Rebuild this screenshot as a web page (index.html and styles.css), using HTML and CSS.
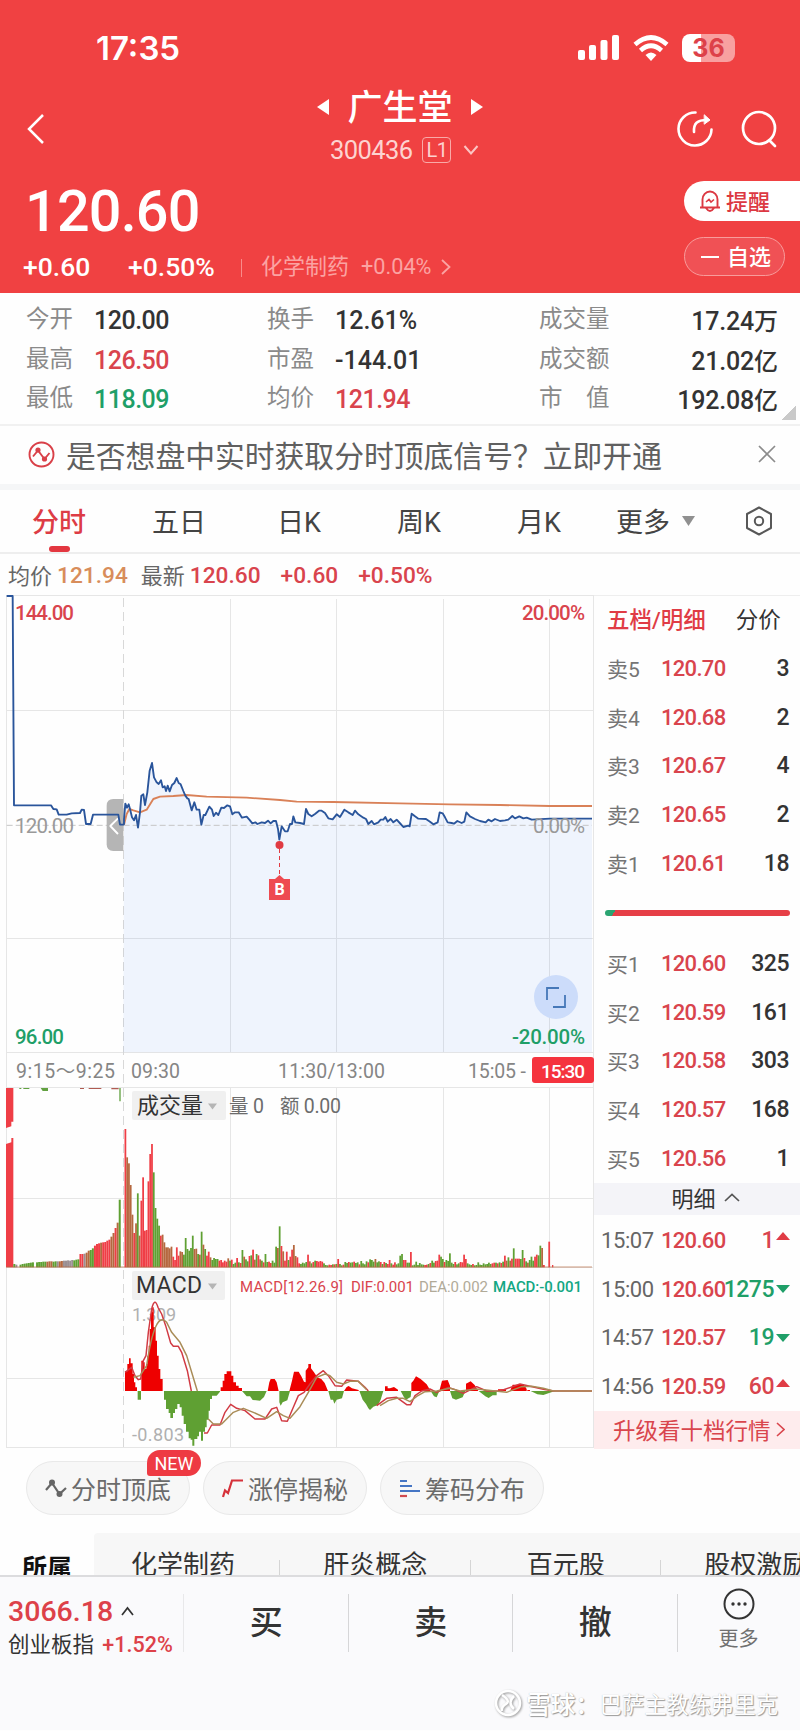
FILE: index.html
```html
<!DOCTYPE html>
<html lang="zh-CN">
<head>
    <meta charset="UTF-8">
    <meta name="viewport" content="width=device-width, initial-scale=1.0">
    <title>广生堂 300436</title>
    <link rel="stylesheet" href="styles.css">
</head>
<body>
    <header class="header">
        <div class="status-bar">
            <span class="clock">17:35</span>
            <div class="status-icons">
                <svg width="42" height="26" viewBox="0 0 42 26" fill="#fff">
                    <rect x="0" y="15" width="7" height="10" rx="2"/>
                    <rect x="11" y="10" width="7" height="15" rx="2"/>
                    <rect x="22.500" y="5" width="7" height="20" rx="2"/>
                    <rect x="34" y="0" width="7" height="25" rx="2"/>
                </svg>
                <svg width="36" height="27" viewBox="0 0 36 27" fill="none" stroke="#fff" stroke-width="4.600">
                    <path d="M2 9.500Q18 -4.500 34 9.500"/>
                    <path d="M7.500 15.500Q18 6 28.500 15.500"/>
                    <path d="M12.500 20Q18 15 23.500 20L18 26Z" fill="#fff" stroke="none"/>
                </svg>
                <div class="battery"><span>36</span></div>
            </div>
        </div>
        <div class="nav">
            <svg class="back" width="18" height="32" viewBox="0 0 18 32" fill="none" stroke="#fff" stroke-width="2.500"><path d="M16 2L2 16L16 30"/></svg>
            <div class="title">
                <div class="title-name">
                    <svg width="12" height="16" viewBox="0 0 12 16" fill="#fff"><path d="M12 0V16L0 8Z"/></svg>
                    <span>广生堂</span>
                    <svg width="12" height="16" viewBox="0 0 12 16" fill="#fff"><path d="M0 0V16L12 8Z"/></svg>
                </div>
                <div class="title-code">
                    <span>300436</span>
                    <span class="level">L1</span>
                    <svg width="16" height="10" viewBox="0 0 16 10" fill="none" stroke="#fbc5c3" stroke-width="2"><path d="M1.500 1L8 8.500L14.500 1"/></svg>
                </div>
            </div>
            <div class="nav-icons">
                <svg width="36" height="38" viewBox="0 0 36 38" fill="none" stroke="#fff" stroke-width="2.600" stroke-linecap="round">
                    <path d="M18.500 2.500A16.500 16.500 0 1 0 34.500 19.500"/>
                    <path d="M17 22C16.500 13.500 20 10 30 10"/>
                    <path d="M27.500 5L33 10L27.500 14Z" fill="#fff" stroke-width="1"/>
                </svg>
                <svg width="36" height="38" viewBox="0 0 36 38" fill="none" stroke="#fff" stroke-width="2.700" stroke-linecap="round">
                    <circle cx="18" cy="18" r="16"/><path d="M28.500 30.500L34 36"/>
                </svg>
            </div>
        </div>
        <div class="quote">
            <div>
                <div class="price">120.60</div>
                <div class="change">
                    <span class="diff">+0.60</span>
                    <span class="pct">+0.50%</span>
                    <span class="sector">化学制药</span>
                    <span class="sector-pct">+0.04%</span>
                    <svg width="10" height="16" viewBox="0 0 10 16" fill="none" stroke="#fba3a2" stroke-width="1.800"><path d="M1 1L8.500 8L1 15"/></svg>
                </div>
            </div>
            <div class="actions">
                <div class="remind">
                    <svg width="22" height="23" viewBox="0 0 22 23" fill="none" stroke="#dc3842" stroke-width="1.900">
                        <path d="M1 17.500H21M3.500 17V9.500A7.500 8 0 0 1 18.500 9.500V17M7 18Q11 24 15 18"/>
                        <path d="M7 12L10 9.500L12 12L15 9.500" stroke-width="1.600"/>
                    </svg>
                    <span>提醒</span>
                </div>
                <div class="favor"><i></i><span>自选</span></div>
            </div>
        </div>
    </header>

    <section class="stats">
        <span>今开</span><b>120.00</b><span>换手</span><b class="wide">12.61%</b><span>成交量</span><b class="right">17.24<em>万</em></b>
        <span>最高</span><b class="red">126.50</b><span>市盈</span><b class="wide">-144.01</b><span>成交额</span><b class="right">21.02<em>亿</em></b>
        <span>最低</span><b class="green">118.09</b><span>均价</span><b class="red">121.94</b><span>市　值</span><b class="right">192.08<em>亿</em></b>
    </section>

    <section class="notice">
        <svg width="27" height="27" viewBox="0 0 27 27" fill="none" stroke="#d94048" stroke-width="1.900">
            <circle cx="13.500" cy="13.500" r="12"/>
            <path d="M5 15.500L10 9.500L16.500 18L21.500 12"/>
            <g fill="#d94048" stroke="none"><circle cx="10" cy="9" r="2.600"/><circle cx="16.500" cy="18" r="2.600"/></g>
        </svg>
        <span>是否想盘中实时获取分时顶底信号？立即开通</span>
        <svg width="18" height="18" viewBox="0 0 18 18" stroke="#8b8b8b" stroke-width="1.700"><path d="M1 1L17 17M17 1L1 17"/></svg>
    </section>

    <nav class="tabs">
        <span class="active">分时</span>
        <span>五日</span>
        <span>日K</span>
        <span>周K</span>
        <span>月K</span>
        <span class="more">更多<svg width="13" height="10" viewBox="0 0 13 10" fill="#909090"><path d="M0 0H13L6.500 10Z"/></svg></span>
        <svg class="setting" width="28" height="30" viewBox="0 0 28 30" fill="none" stroke="#585858" stroke-width="2">
            <path d="M14 1.500L26 8V22L14 28.500L2 22V8Z" stroke-linejoin="round"/><circle cx="14" cy="15" r="4.200"/>
        </svg>
    </nav>

    <div class="latest">
        <span>均价</span><b class="orange">121.94</b><span>最新</span><b>120.60</b><b>+0.60</b><b>+0.50%</b>
    </div>

    <main class="board">
        <svg class="chart" width="594" height="856" viewBox="0 596 594 856">
            <!-- grid -->
            <g stroke="#e6e6e6" fill="none">
                <path d="M6.500 596V1449M593.500 596V1449"/>
                <path d="M230.500 600V1053M336.500 600V1053M443.500 600V1053M549.500 600V1053"/>
                <path d="M230.500 1088V1449M336.500 1088V1449M443.500 1088V1449M549.500 1088V1449"/>
                <path d="M6 596.500H594M6 711.500H594M6 939.500H594M6 1053.500H594M6 1088.500H594M6 1199.500H594M6 1268.500H594M6 1379.500H594M6 1448.500H594"/>
                <path d="M123.500 599V1449" stroke="#d8d8d8" stroke-dasharray="9 5"/>
            </g>

            <!-- price -->
            <g class="line" transform="translate(0 580) scale(.33333)">
                <path id="area" fill="#3c78f0" fill-opacity=".075"/>
                <path d="M20 739H1776" stroke="#c6c6c6" stroke-dasharray="18 9"/>
                <g fill="#b5b5b5" stroke="none"><path d="M370 660H340Q320 660 320 680V796Q320 816 340 816H370Z"/></g>
                <path d="M354 718L331 741L354 765" stroke="#fff"/>
                <polyline points="372,737 380,705 388,690 400,694 420,700 440,692 460,660 480,653 520,651 560,648 620,653 740,656 840,663 890,668 1000,669 1200,673 1350,676 1500,678 1650,681 1776,681" stroke="#d98158"/>
                <polyline points="20,51 38,51 42,679 153,679 160,690 170,691 176,707 200,707 215,703 240,702 245,692 252,693 258,735 272,735 279,707 355,707 360,737 372,737" stroke="#2a559b"/>
                <polyline id="price" points="372,737 372,720 376,674 381,686 386,676 390,690 396,715 402,724 408,708 414,746 420,700 424,650 430,646 435,678 442,640 449,575 456,552 462,595 470,610 476,615 483,604 488,625 494,622 498,636 503,620 509,637 516,618 523,612 530,597 536,612 542,616 550,636 556,650 562,658 566,660 575,694 583,670 590,692 598,692 604,737 611,708 616,708 628,683 636,692 641,711 648,701 655,708 664,686 672,687 682,679 690,682 697,706 705,700 716,700 726,716 740,713 748,722 757,733 766,730 772,735 785,730 795,732 804,725 812,733 820,726 828,726 834,750 838,782 845,742 855,757 863,757 870,735 876,735 880,712 886,730 900,732 912,735 918,690 925,705 935,712 945,705 957,695 965,695 975,702 985,718 998,721 1010,706 1020,714 1033,692 1045,700 1058,708 1065,695 1075,706 1090,716 1098,720 1105,735 1115,726 1122,736 1135,730 1142,722 1150,722 1156,714 1163,728 1172,720 1180,730 1190,722 1202,735 1210,744 1225,740 1229,742 1235,704 1245,712 1255,719 1278,720 1290,728 1300,736 1313,730 1319,700 1328,703 1335,715 1343,730 1355,732 1362,734 1372,726 1385,732 1393,728 1399,700 1410,712 1425,720 1440,726 1457,730 1465,722 1475,727 1485,720 1500,726 1515,724 1525,722 1537,711 1545,718 1558,712 1570,718 1580,716 1595,722 1650,719 1776,719" stroke="#2a559b"/>
            </g>
            <circle cx="279.500" cy="846" r="4" fill="#e03a42"/>
            <path d="M279.500 850V878" stroke="#e03a42" stroke-dasharray="4 3"/>
            <path d="M275 880L279.500 876L284 880H290V901H269V880Z" fill="#ee4a51"/>
            <text x="279.500" y="896" text-anchor="middle" fill="#fff" font-size="16" font-weight="700">B</text>
            <g font-size="20.500" font-weight="500">
                <text x="15" y="621" textLength="59" class="red">144.00</text>
                <text x="15" y="834" textLength="59" fill="#999" font-weight="400">120.00</text>
                <text x="15" y="1045" textLength="49" class="green">96.00</text>
                <text x="522" y="621" textLength="63" class="red">20.00%</text>
                <text x="533" y="834" textLength="52" fill="#999" font-weight="400">0.00%</text>
                <text x="512" y="1045" textLength="73" class="green">-20.00%</text>
            </g>
            <circle cx="556" cy="998" r="22" fill="#ccdcfa"/>
            <path d="M547 1001V989H559M553 1008H565V996" fill="none" stroke="#4678b8" stroke-width="1.800"/>

            <!-- time axis -->
            <g font-size="19.500" fill="#858585">
                <text x="16" y="1079" textLength="99">9:15～9:25</text>
                <text x="131" y="1079" textLength="49">09:30</text>
                <text x="278" y="1079" textLength="107">11:30/13:00</text>
                <text x="468" y="1079" textLength="58">15:05 -</text>
            </g>
            <rect x="532" y="1058" width="62" height="26" rx="3" fill="#f5333e"/>
            <text x="541" y="1079" textLength="44" font-size="19" fill="#fff" font-weight="500">15:30</text>

            <!-- volume -->
            <g id="volume" transform="translate(0 1060) scale(.33333)">
                <path d="M18 87H40V188H34V202L18 207ZM18 255L34 250V237H40V625H18Z" fill="#ef3e46"/>
                <path d="M358 87H362V127H358ZM122 87H144V96H128ZM58 87H64V90H58ZM70 87H88V90H70Z" fill="#62a141"/>
                <path d="M240 87H252V90H240ZM266 87H304V90H266ZM334 87H356V91H334Z" fill="#b05b52"/>
            </g>
            <rect x="132" y="1092" width="94" height="29" rx="2" fill="#f0f0f0"/>
            <text x="137" y="1114" textLength="66" font-size="22" fill="#333">成交量</text>
            <path d="M208 1104.500H217L212.500 1110.500Z" fill="#b5b5b5"/>
            <g font-size="19.500" fill="#6c6c6c">
                <text x="229" y="1114" textLength="35">量 0</text>
                <text x="280" y="1114" textLength="61">额 0.00</text>
            </g>

            <!-- macd -->
            <rect x="132" y="1272" width="93" height="29" rx="2" fill="#f0f0f0"/>
            <text x="136" y="1293.500" textLength="66" font-size="23" fill="#333">MACD</text>
            <path d="M208 1284.500H217L212.500 1290.500Z" fill="#b5b5b5"/>
            <g font-size="15">
                <text x="240" y="1293" textLength="103" class="red">MACD[12.26.9]</text>
                <text x="351" y="1293" textLength="63" class="red">DIF:0.001</text>
                <text x="419" y="1293" textLength="69" fill="#b1aa98">DEA:0.002</text>
                <text x="493" y="1293" textLength="89" fill="#12a783" font-weight="500">MACD:-0.001</text>
            </g>
            <g font-size="18" fill="#b0b0b0">
                <text x="132" y="1322" textLength="44">1.309</text>
                <text x="132" y="1442" textLength="52">-0.803</text>
            </g>
            <g class="macd" transform="translate(0 1060) scale(.33333)">
                <path fill="#ee0000" d="M375 996V937H382V915H387V898H392V913H398V945H402V970H406V985H411V996ZM424 996V905H429V910H434V930H439V915H442V890H446V860H449V810H453V760H457V745H461V805H467V845H471V890H476V930H481V960H488V996ZM662 996V985H668V965H673V945H680V937H694V950H700V970H708V980H716V987H726V996ZM803 996L808 970L812 960H824L830 970L836 996ZM868 996L876 965L882 938H896L904 952L912 968L917 970V935L925 925V915H933V928L942 940L952 955L964 960L974 972L984 996ZM1032 996L1040 984L1046 981L1056 988L1076 993V996ZM1155 996V982H1163V988H1170L1182 984L1194 992V996ZM1234 996V972L1240 965L1248 952L1262 960L1280 976L1292 996ZM1318 996L1326 965L1343 963L1350 980V996ZM1398 996V974L1412 967L1424 978L1435 996ZM1494 996V991H1518V996ZM1530 996L1538 977H1572L1580 990V996ZM1582 996V993H1590V996Z"/>
                <path fill="#5fa033" d="M413 996V1022H423V996ZM492 996V1022H498V1050H506V1062H511V1077H519V1062H525V1050H532V1035H539V1045H545V1070H551V1095H558V1118H566V1138H572V1142H577V1160H583V1140H592V1132H597V1118H603V1145H609V1118H615V1105H620V1082H626V1055H630V1020H636V1010H650L660 998V996ZM726 996L740 1012L750 1012L758 1023L780 1025L792 1014L800 996ZM838 996V1030L842 1040L848 1030L862 1024L870 996ZM985 996L992 1022H999L1003 1034L1010 1022L1026 1018L1032 996ZM1078 996L1088 1022L1098 1035L1105 1048L1110 1053L1120 1043L1134 1038L1142 1022L1150 996ZM1202 996L1212 1015L1218 1022L1232 1014L1234 996ZM1292 996L1302 1012L1310 1015L1318 996ZM1350 996L1357 1018L1368 1022L1388 1015L1396 996ZM1436 996L1456 1012L1466 1017L1478 1009H1490V996ZM1592 996L1612 1006L1630 1008L1665 996Z"/>
                <g class="line">
                    <path stroke="#d13a43" d="M375 940L395 925L405 950L415 962L422 960L430 905L438 890L445 820L455 750Q464 712 474 745L485 765L497 800L512 852L520 862H535L545 880L562 935L574 996M612 1122L622 1122L635 1098L660 1098L675 1060L692 1036L710 1048L735 1055L765 1080L795 1080L815 1050L830 1045L845 1085L862 1087L880 1045L895 1010L912 1000L930 975L950 950L970 935L985 950L1005 980L1025 982L1040 963L1075 967L1095 985L1105 996M1130 1040L1160 1018L1190 1015L1220 1037L1232 1037L1245 1010L1265 996L1290 990L1310 1000L1345 985L1365 992L1390 1003L1430 983L1460 996L1500 996L1560 975L1630 991L1660 996H1776"/>
                    <path stroke="#a98c57" d="M400 955L420 950L440 920Q465 750 500 790L515 820L540 850L560 890L575 940L592 996M625 1080L640 1095L665 1095L700 1060L730 1048L760 1060L800 1078L830 1058L850 1070L870 1078L900 1043L925 1000L950 955L975 945L990 950L1010 970L1030 975L1050 967L1075 967L1100 992M1140 1040L1165 1025L1190 1018L1210 1018L1230 1028L1250 1012L1275 998L1310 996L1350 988L1380 996L1430 990L1465 994L1520 1000L1565 983L1595 982L1630 988L1660 996H1776"/>
                </g>
            </g>
        </svg>

        <aside class="depth">
            <div class="depth-tabs"><span class="active">五档/明细</span><span>分价</span></div>
            <div class="orders">
                <div class="order"><span>卖5</span><b>120.70</b><i>3</i></div>
                <div class="order"><span>卖4</span><b>120.68</b><i>2</i></div>
                <div class="order"><span>卖3</span><b>120.67</b><i>4</i></div>
                <div class="order"><span>卖2</span><b>120.65</b><i>2</i></div>
                <div class="order"><span>卖1</span><b>120.61</b><i>18</i></div>
            </div>
            <div class="ratio"></div>
            <div class="orders">
                <div class="order"><span>买1</span><b>120.60</b><i>325</i></div>
                <div class="order"><span>买2</span><b>120.59</b><i>161</i></div>
                <div class="order"><span>买3</span><b>120.58</b><i>303</i></div>
                <div class="order"><span>买4</span><b>120.57</b><i>168</i></div>
                <div class="order"><span>买5</span><b>120.56</b><i>1</i></div>
            </div>
            <div class="deals-title">明细<svg width="16" height="9" viewBox="0 0 16 9" fill="none" stroke="#555" stroke-width="1.700"><path d="M1 8L8 1.500L15 8"/></svg></div>
            <div class="orders">
                <div class="order deal up"><span>15:07</span><b>120.60</b><i>1</i></div>
                <div class="order deal down"><span>15:00</span><b>120.60</b><i>1275</i></div>
                <div class="order deal down"><span>14:57</span><b>120.57</b><i>19</i></div>
                <div class="order deal up"><span>14:56</span><b>120.59</b><i>60</i></div>
            </div>
            <div class="upgrade">升级看十档行情<svg width="9" height="15" viewBox="0 0 9 15" fill="none" stroke="#d9464d" stroke-width="1.600"><path d="M1 1L8 7.500L1 14"/></svg></div>
        </aside>
    </main>

    <div class="tools">
        <div class="tool">
            <svg width="22" height="19" viewBox="0 0 22 19" fill="none" stroke="#666" stroke-width="2.200"><path d="M1 11L7 4L14.500 15L21 9"/><g fill="#666" stroke="none"><circle cx="7" cy="3.500" r="3"/><circle cx="14.500" cy="15" r="3"/></g></svg>
            <span>分时顶底</span>
            <em class="new">NEW</em>
        </div>
        <div class="tool">
            <svg width="22" height="19" viewBox="0 0 22 19" fill="none" stroke="#d6313a" stroke-width="2.200"><path d="M1 18L3 11.500L6 14L10 1.500H21"/></svg>
            <span>涨停揭秘</span>
        </div>
        <div class="tool">
            <svg width="22" height="19" viewBox="0 0 22 19" stroke="#4575c4" stroke-width="2.200"><path d="M1 2H8M1 7H13M1 12H21"/><path d="M1 17H8" stroke="#cf4b50"/></svg>
            <span>筹码分布</span>
        </div>
    </div>

    <section class="concepts">
        <b>所属</b>
        <div class="concept-list">
            <span>化学制药</span><span>肝炎概念</span><span>百元股</span><span>股权激励</span>
        </div>
    </section>

    <footer class="footer">
        <div class="trade">
            <div class="index">
                <div class="index-value">3066.18<svg width="13" height="10" viewBox="0 0 13 10" fill="none" stroke="#333" stroke-width="1.700"><path d="M1 9L6.500 2L12 9"/></svg></div>
                <div class="index-name">创业板指 <span>+1.52%</span></div>
            </div>
            <div class="btn">买</div>
            <div class="btn">卖</div>
            <div class="btn">撤</div>
            <div class="btn-more">
                <svg width="32" height="32" viewBox="0 0 32 32"><circle cx="16" cy="16" r="14.500" fill="none" stroke="#333" stroke-width="2"/><g fill="#333"><circle cx="10" cy="16" r="1.700"/><circle cx="16" cy="16" r="1.700"/><circle cx="22" cy="16" r="1.700"/></g></svg>
                <span>更多</span>
            </div>
        </div>
        <div class="watermark">
            <svg width="28" height="28" viewBox="0 0 28 28" fill="none" stroke="#fff" stroke-width="2.500"><circle cx="14" cy="14" r="12"/><path d="M8 6Q17 12 12 15T8 22M20 7Q13 14 20 20"/></svg>
            <b>雪球：</b><span>巴萨主教练弗里克</span>
        </div>
    </footer>

    <script src="chart.js"></script>
</body>
</html>
```
FILE: styles.css
```css
* {
    box-sizing: border-box;
}

body {
    margin: 0;
    width: 800px;
    height: 1731px;
    overflow: hidden;
    background: #fefefe;
    font-family: Roboto, "Noto Sans CJK SC", sans-serif;
    color: #333;
}

svg {
    flex: none;
}

i, em {
    font-style: normal;
}

.red {
    color: #d9444d;
    fill: #d9444d;
}

.green {
    color: #1f9f68;
    fill: #1f9f68;
}

/* header */
.header {
    height: 293px;
    background: #f04142;
    color: #fff;
}

.status-bar {
    display: flex;
    justify-content: space-between;
    align-items: center;
    height: 96px;
    padding: 0 63px 0 96px;
}

.clock {
    font: 600 33px/40px Inter, sans-serif;
}

.status-icons {
    display: flex;
    align-items: center;
    gap: 13px;
}

.battery {
    width: 53px;
    height: 28px;
    margin-right: 2px;
    border-radius: 8px;
    background: linear-gradient(90deg, #fff 36%, #f8a0a0 36%);
    color: #dd4149;
    font: 700 25px/28px Inter, sans-serif;
    text-align: center;
}

.nav {
    display: flex;
    height: 80px;
    padding: 0 23px 0 27px;
}

.back {
    margin-top: 17px;
}

.title {
    width: 240px;
    margin-left: 235px;
}

.title-name {
    display: flex;
    justify-content: center;
    align-items: center;
    gap: 18px;
    height: 22px;
    font-size: 35px;
    font-weight: 500;
}

.title-name span {
    margin-top: -6px;
}

.title-code {
    display: flex;
    align-items: center;
    height: 26px;
    margin-top: 19px;
    padding-left: 50px;
    font-size: 25.5px;
    letter-spacing: -0.6px;
    color: #fdd3d0;
}

.level {
    width: 29px;
    height: 26px;
    margin: 0 12px 0 10px;
    border: 1px solid #f9aaa8;
    border-radius: 4px;
    font-size: 20px;
    line-height: 24px;
    text-align: center;
}

.nav-icons {
    display: flex;
    gap: 28px;
    margin: 14px 0 0 auto;
}

.quote {
    display: flex;
    justify-content: space-between;
}

.price {
    height: 70px;
    padding-left: 25px;
    font-size: 57.5px;
    font-weight: 500;
    line-height: 72px;
    letter-spacing: -0.8px;
}

.change {
    display: flex;
    align-items: center;
    height: 41px;
    padding-left: 23px;
    font-size: 26.5px;
    font-weight: 500;
}

.diff {
    width: 105px;
}

.pct {
    width: 113px;
}

.sector {
    padding-left: 20px;
    background: linear-gradient(#f98b8a, #f98b8a) 0 60% / 1px 18px no-repeat;
    color: #fba3a2;
    font-size: 22px;
    font-weight: 400;
    line-height: 32px;
}

.sector-pct {
    width: 71px;
    margin: 0 9px 0 12px;
    color: #fba3a2;
    font-size: 21.7px;
    font-weight: 400;
}

.actions {
    width: 116px;
    padding-top: 5px;
    font-size: 22px;
    font-weight: 500;
}

.actions span {
    margin-top: -3px;
}

.remind {
    display: flex;
    align-items: center;
    gap: 5px;
    height: 40px;
    padding-left: 15px;
    border-radius: 20px 0 0 20px;
    background: #fff;
    color: #dc3842;
}

.favor {
    display: flex;
    align-items: center;
    gap: 8px;
    width: 101px;
    height: 39px;
    margin-top: 16px;
    padding-left: 16px;
    border: 1px solid #f89c9b;
    border-radius: 20px;
    background: #f05155;
}

.favor i {
    width: 18px;
    height: 2px;
    background: #fff;
}

/* stats */
.stats {
    display: grid;
    grid-template-columns: 68px 173px 68px 204px 110px 1fr;
    grid-auto-rows: 39.5px;
    align-items: center;
    height: 133px;
    padding: 8px 22px 0 26px;
    border-bottom: 2px solid #f1f1f1;
    background: linear-gradient(135deg, transparent 50%, #c9c9c9 50%) 782px 113px / 14px 14px no-repeat;
    font-size: 25px;
}

.stats span {
    font-size: 23.5px;
    line-height: 34px;
    margin-top: -3px;
    color: #8a8a8a;
}

.stats b {
    font-weight: 500;
    letter-spacing: -0.5px;
}

.stats .wide {
    letter-spacing: 0;
}

.stats em {
    font-size: 24px;
    letter-spacing: 0;
}

.stats .right {
    margin-top: -2px;
    letter-spacing: -0.2px;
    text-align: right;
}

/* notice */
.notice {
    display: flex;
    align-items: center;
    height: 64px;
    padding: 0 24px 2px 28px;
    border-bottom: 6px solid #f5f6f7;
    font-size: 29.8px;
    color: #606060;
}

.notice span {
    margin: 0 auto 0 11px;
}

/* tabs */
.tabs {
    position: relative;
    display: flex;
    align-items: center;
    height: 64px;
    padding-left: 32px;
    border-bottom: 2px solid #eee;
    font-size: 27px;
    white-space: nowrap;
    color: #444;
}

.tabs span {
    width: 120px;
    padding-bottom: 1px;
}

.tabs .active {
    color: #dd3c45;
    font-weight: 500;
}

.tabs .active::after {
    content: "";
    position: absolute;
    left: 49px;
    bottom: 0;
    width: 21px;
    height: 6px;
    border-radius: 3px;
    background: #e33740;
}

.tabs span:nth-child(2) {
    width: 125px;
}

.tabs span:nth-child(5) {
    width: 99px;
}

.tabs .more {
    display: flex;
    align-items: center;
    gap: 12px;
    width: 129px;
}

.latest {
    display: flex;
    align-items: center;
    height: 41px;
    padding-left: 8px;
    font-size: 22px;
    color: #666;
}

.latest span {
    margin-top: -1px;
}

.latest b {
    margin: 2px 17px 0 5px;
    font-size: 22.7px;
    font-weight: 500;
    color: #d9444d;
}

.latest b + b {
    margin-left: 3px;
}

.latest .orange {
    margin-right: 13px;
    color: #d88d5b;
}

/* chart + order book */
.board {
    display: flex;
    height: 856px;
}

.chart {
    display: block;
    font-family: Roboto, "Noto Sans CJK SC", sans-serif;
}

.line {
    fill: none;
    stroke-width: 5.6;
    stroke-linejoin: round;
}

.line [stroke-dasharray] {
    stroke-width: 3;
}

.macd .line {
    stroke-width: 4.4;
}

.depth {
    width: 206px;
    border-top: 1px solid #eee;
}

.depth-tabs {
    display: flex;
    align-items: center;
    gap: 30px;
    height: 48px;
    padding: 0 0 4px 13px;
    font-size: 22.5px;
}

.depth-tabs .active {
    color: #e03c45;
    font-weight: 500;
}

.order {
    display: flex;
    align-items: center;
    height: 48.8px;
    padding: 0 11px 0 13px;
    font-size: 22px;
}

.order span {
    width: 54px;
    font-size: 21px;
    margin-top: -1px;
    color: #757575;
}

.order b {
    width: 66px;
    font-weight: 500;
    letter-spacing: -0.7px;
    color: #d9444d;
}

.order i {
    flex: 1;
    font-size: 23px;
    font-weight: 500;
    letter-spacing: -0.5px;
    text-align: right;
}

.ratio {
    height: 6px;
    margin: 22px 10px 23px 11px;
    border-radius: 3px;
    background: linear-gradient(120deg, #2ba471 9px, #e63f47 9px);
}

.deals-title {
    display: flex;
    justify-content: center;
    align-items: center;
    gap: 8px;
    height: 32px;
    padding: 0 0 3px 17px;
    background: #f4f4f8;
    font-size: 22px;
}

.deals-title + .orders {
    padding-top: 1px;
}

.deal {
    padding: 0 10px 0 7px;
}

.deal span {
    width: 60px;
    margin-top: 0;
    font-size: 22px;
    letter-spacing: -0.4px;
    color: #666;
}

.deal b {
    width: 62px;
}

.deal i {
    display: flex;
    justify-content: flex-end;
    align-items: center;
    gap: 2px;
}

.deal i::after {
    content: "";
    border: 7px solid transparent;
}

.up i {
    color: #d9444d;
}

.up i::after {
    border-top: 0;
    border-bottom: 8px solid #e03c45;
    margin-top: -8px;
}

.down i {
    color: #1f9f68;
}

.down i::after {
    border-bottom: 0;
    border-top: 8px solid #1f9f68;
}

.upgrade {
    display: flex;
    align-items: center;
    gap: 5px;
    height: 38px;
    padding: 0 0 2px 19px;
    background: #feeced;
    font-size: 22.5px;
    color: #d9464d;
}

/* tools */
.tools {
    display: flex;
    gap: 13px;
    padding: 10px 26px 0;
}

.tool {
    position: relative;
    display: flex;
    align-items: center;
    gap: 4px;
    width: 164px;
    height: 54px;
    padding-left: 18px;
    border: 1px solid #e9e9e9;
    border-radius: 27px;
    background: #f7f7f7;
    font-size: 25px;
    color: #6b6b6b;
}

.new {
    position: absolute;
    left: 120px;
    top: -12px;
    width: 54px;
    height: 26px;
    border-radius: 13px 13px 13px 3px;
    background: #ee3a43;
    color: #fff;
    font-size: 18px;
    line-height: 27px;
    text-align: center;
}

/* concepts */
.concepts {
    display: flex;
    height: 60px;
    padding-top: 18px;
    overflow: hidden;
}

.concepts > b {
    width: 94px;
    padding: 17px 0 0 22px;
    font-size: 25px;
    line-height: 37px;
    color: #111;
}

.concept-list {
    display: flex;
    width: 706px;
    padding-top: 14px;
    border-radius: 4px 0 0 0;
    background: #f7f7f7;
    font-size: 26px;
    line-height: 37px;
}

.concept-list span {
    flex: none;
    width: 190.5px;
    text-align: center;
    background: linear-gradient(#d5d5d5, #d5d5d5) 100% 13px / 1px 40px no-repeat;
}

.concept-list span:first-child {
    width: 186px;
    padding-right: 8px;
}

/* footer */
.footer {
    height: 155px;
    border-top: 2px solid #dcdcde;
    background: #fafafc;
}

.trade {
    display: flex;
    height: 104px;
}

.index {
    width: 184px;
    padding: 14px 0 0 8px;
    background: linear-gradient(#e8e8ea, #e8e8ea) 100% 17px / 1px 58px no-repeat;
}

.index-value {
    display: flex;
    align-items: center;
    gap: 8px;
    height: 40px;
    font-size: 28.5px;
    font-weight: 500;
    color: #dd4149;
}

.index-name {
    font-size: 21.5px;
    line-height: 27px;
    white-space: pre;
}

.index-name span {
    margin-left: 3px;
    color: #dd4149;
    font-weight: 500;
}

.btn {
    width: 164.5px;
    background: linear-gradient(#d6d6d8, #d6d6d8) 100% 17px / 1px 58px no-repeat;
    font-size: 33px;
    font-weight: 500;
    line-height: 91px;
    text-align: center;
}

.btn-more {
    display: flex;
    flex-direction: column;
    align-items: center;
    gap: 4px;
    width: 122px;
    padding-top: 11px;
    font-size: 20px;
    line-height: 30px;
    color: #707070;
}

.watermark {
    display: flex;
    justify-content: flex-end;
    align-items: center;
    height: 44px;
    padding-right: 22px;
    color: #fff;
    font-size: 22.3px;
    text-shadow: 1px 1px 1px #999, 0 0 1px #bbb;
}

.watermark svg {
    margin-right: 4px;
    filter: drop-shadow(1px 1px 1px #999);
}

.watermark b {
    font-size: 25px;
    font-weight: 500;
    letter-spacing: -0.5px;
}
```
FILE: chart.js
```js
const SVG_NS = 'http://www.w3.org/2000/svg';
const COLORS = { r: '#ef3e46', g: '#5fa033', b: '#b5683f', s: '#9b8f93' };
const BASE = 625;

const volume = document.getElementById('volume');

function addBar(x, width, height, color) {
    const bar = document.createElementNS(SVG_NS, 'rect');
    bar.setAttribute('x', x);
    bar.setAttribute('y', BASE - height);
    bar.setAttribute('width', width);
    bar.setAttribute('height', height);
    bar.setAttribute('fill', COLORS[color]);
    volume.appendChild(bar);
}

// Call auction, 9:15 - 9:25
const auction = 'g10 s8 _0 g8 g10 g11 g12 g13 g14 g15 _0 g15 g16 g16 g17 g17 b17 b18 b18 g17 g18 s18 b18 b19 s20 s20 s21 s20 s22 g21 g23 g24 r40 r40 s41 b44 b50 g52 g57 r65 r70 r72 b74 r75 r76 r80 r83 b92 b103 r118 b134 g203';
auction.split(' ').forEach((item, i) => {
    addBar(40 + i * 6.2, 6, Number(item.slice(1)), item[0] === '_' ? 'g' : item[0]);
});

// One bar per minute, 9:30 - 15:00
const minutes = 'r415 b330 b312 b247 b158 r103 b132 g222 b95 r200 r270 r110 r112 r258 r340 r370 g285 g178 g146 g125 ' +
    'r95 b98 b75 b60 b60 b57 b62 r32 r22 r60 r35 b48 b46 g38 g88 g55 g50 g58 g95 b55 ' +
    'b56 g40 b38 g107 b68 g55 r35 r47 b30 g22 g28 g25 g25 r20 r22 r15 r20 r17 b27 g20 ' +
    'r23 g10 g14 r28 g15 r13 g52 b32 g24 g18 r34 g36 r53 b23 g40 r36 b24 g20 r15 g40 ' +
    'g16 r17 r13 g20 g14 g62 b58 g123 r64 b48 r20 r47 g22 r32 r53 b67 b34 r30 r12 g10 ' +
    'g14 g12 g16 r38 b18 g12 r16 g20 r19 r17 r19 r17 g12 g7 g6 r8 r7 g9 r9 g10 ' +
    'r25 g10 g6 r8 g16 g13 r16 g14 g15 r17 g13 g15 r9 g19 g12 g9 g18 r15 g24 g22 ' +
    'g17 b25 g15 g18 r16 g10 r16 g13 r10 r22 g12 r8 r15 g9 g12 g35 g40 r22 r22 g14 ' +
    'g14 r46 g6 g8 g17 g7 g13 g9 g8 r7 r8 g10 r13 g20 g14 r19 r20 r38 g32 g25 ' +
    'r16 g22 g19 g42 g14 g10 r16 g9 g12 r16 r15 r38 r25 g12 g9 g7 r10 g6 g7 g15 ' +
    'g8 g7 g12 g9 g10 g14 g10 r12 r14 g14 r12 g15 r13 g17 r35 b20 g30 b20 r26 g57 ' +
    'r26 r26 r26 g25 g52 r28 g18 b14 g22 g32 g20 r32 r38 g36 g65 b58 r7 _0 _0 r77';
minutes.split(' ').forEach((item, i) => {
    if (item[0] !== '_') {
        addBar(373.5 + i * 5.32, 5.32, Number(item.slice(1)), item[0]);
    }
});
addBar(1656, 4, 7, 'r');
addBar(18, 1758, 2, 'b');

// Shade everything under the price line
const points = document.getElementById('price').getAttribute('points');
document.getElementById('area').setAttribute('d', 'M370 1420L' + points.split(' ').join('L') + 'L1776 1420Z');
```
